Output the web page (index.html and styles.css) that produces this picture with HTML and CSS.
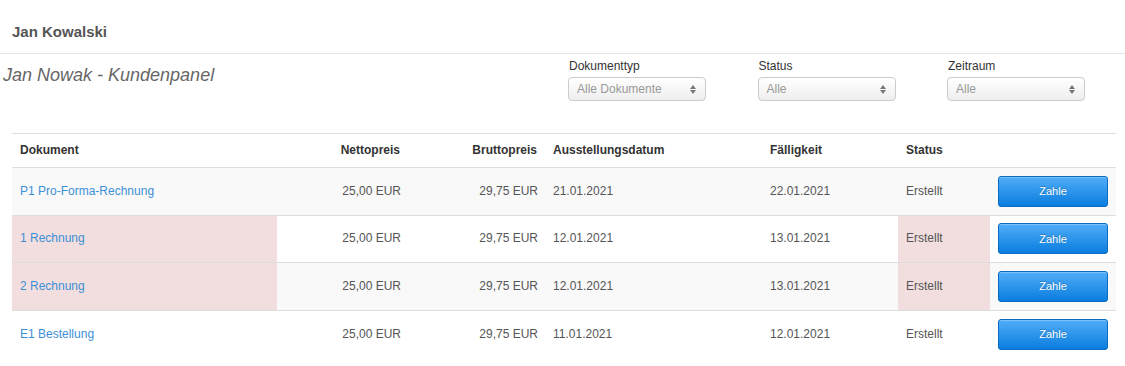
FILE: index.html
```html
<!DOCTYPE html>
<html lang="de">
<head>
<meta charset="utf-8">
<title>Kundenpanel</title>
<link rel="stylesheet" href="styles.css">
</head>
<body>
<header class="topbar">Jan Kowalski</header>
<section class="panel-head">
  <h1 class="panel-title">Jan Nowak - Kundenpanel</h1>
  <div class="filters">
    <div class="filter">
      <label class="filter-label">Dokumenttyp</label>
      <div class="select"><span>Alle Dokumente</span><span class="arrows"></span></div>
    </div>
    <div class="filter">
      <label class="filter-label">Status</label>
      <div class="select"><span>Alle</span><span class="arrows"></span></div>
    </div>
    <div class="filter">
      <label class="filter-label">Zeitraum</label>
      <div class="select"><span>Alle</span><span class="arrows"></span></div>
    </div>
  </div>
</section>
<table class="docs">
  <colgroup>
    <col class="c1"><col class="c2"><col class="c3"><col class="c4"><col class="c5"><col class="c6"><col class="c7">
  </colgroup>
  <thead>
    <tr>
      <th>Dokument</th>
      <th class="num">Nettopreis</th>
      <th class="num">Bruttopreis</th>
      <th>Ausstellungsdatum</th>
      <th>Fälligkeit</th>
      <th>Status</th>
      <th></th>
    </tr>
  </thead>
  <tbody>
    <tr class="odd">
      <td><a href="#">P1 Pro-Forma-Rechnung</a></td>
      <td class="num">25,00 EUR</td>
      <td class="num">29,75 EUR</td>
      <td>21.01.2021</td>
      <td>22.01.2021</td>
      <td>Erstellt</td>
      <td><button class="pay">Zahle</button></td>
    </tr>
    <tr>
      <td class="warn"><a href="#">1 Rechnung</a></td>
      <td class="num">25,00 EUR</td>
      <td class="num">29,75 EUR</td>
      <td>12.01.2021</td>
      <td>13.01.2021</td>
      <td class="warn">Erstellt</td>
      <td><button class="pay">Zahle</button></td>
    </tr>
    <tr class="odd">
      <td class="warn"><a href="#">2 Rechnung</a></td>
      <td class="num">25,00 EUR</td>
      <td class="num">29,75 EUR</td>
      <td>12.01.2021</td>
      <td>13.01.2021</td>
      <td class="warn">Erstellt</td>
      <td><button class="pay">Zahle</button></td>
    </tr>
    <tr>
      <td><a href="#">E1 Bestellung</a></td>
      <td class="num">25,00 EUR</td>
      <td class="num">29,75 EUR</td>
      <td>11.01.2021</td>
      <td>12.01.2021</td>
      <td>Erstellt</td>
      <td><button class="pay">Zahle</button></td>
    </tr>
  </tbody>
</table>
</body>
</html>
```
FILE: styles.css
```css
* { box-sizing: border-box; }
html, body { margin: 0; padding: 0; background: #fff; }
body {
  font-family: "Liberation Sans", Arial, sans-serif;
  font-size: 12px;
  color: #555;
}
.topbar {
  height: 54px;
  padding: 23px 0 0 12px;
  font-size: 15px;
  line-height: 18px;
  font-weight: bold;
  color: #555;
  border-bottom: 1px solid #dde4ea;
}
.panel-head {
  display: flex;
  align-items: flex-start;
  height: 79px;
}
.panel-title {
  margin: 11px 0 0 3px;
  font-size: 18px;
  line-height: 21px;
  font-weight: normal;
  font-style: italic;
  color: #666;
  width: 565px;
}
.filters {
  display: flex;
  gap: 51.5px;
  padding-top: 5px;
}
.filter {
  display: flex;
  flex-direction: column;
  width: 138px;
}
.filter-label {
  font-size: 12px;
  line-height: 14px;
  color: #333;
  padding-left: 1px;
  margin-bottom: 4px;
}
.select {
  display: flex;
  justify-content: space-between;
  align-items: center;
  height: 24px;
  padding: 0 9px 0 8px;
  border: 1px solid #ccc;
  border-radius: 4px;
  background: linear-gradient(#ffffff, #eeeeee);
  color: #999;
  font-size: 12px;
}
.arrows {
  display: flex;
  flex-direction: column;
  gap: 1px;
}
.arrows::before, .arrows::after {
  content: "";
  width: 0;
  height: 0;
  border-left: 3px solid transparent;
  border-right: 3px solid transparent;
}
.arrows::before { border-bottom: 4px solid #777; }
.arrows::after { border-top: 4px solid #777; }
.docs {
  margin-left: 12px;
  width: 1104px;
  border-collapse: collapse;
  table-layout: fixed;
  border-top: 1px solid #ddd;
}
.c1 { width: 265px; }
.c2 { width: 131px; }
.c3 { width: 137px; }
.c4 { width: 217px; }
.c5 { width: 136px; }
.c6 { width: 92px; }
.c7 { width: 126px; }
.docs th {
  text-align: left;
  font-weight: bold;
  color: #333;
  line-height: 15px;
  padding: 9px 8px;
  border-bottom: 1px solid #ddd;
}
.docs td {
  height: 47.5px;
  padding: 0 8px;
  line-height: 15px;
  border-bottom: 1px solid #ddd;
  vertical-align: middle;
}
.docs tbody tr:last-child td { border-bottom: none; }
.docs th.num, .docs td.num { text-align: right; }
.docs td.num { padding-right: 7px; }
.docs tr.odd td { background: #f9f9f9; }
.docs tr td.warn { background: #f2dede; }
.docs a { color: #3d8fd6; text-decoration: none; }
.pay {
  display: block;
  width: 110px;
  height: 31px;
  margin: 0;
  padding: 0;
  border: 1px solid #0a6cc0;
  border-radius: 3px;
  background: linear-gradient(#50adf7, #0a7ddf);
  color: #fff;
  font-family: "Liberation Sans", Arial, sans-serif;
  font-size: 11px;
  text-shadow: 0 -1px 0 rgba(0, 0, 0, 0.25);
  box-shadow: inset 0 1px 0 rgba(255, 255, 255, 0.25);
}
```
